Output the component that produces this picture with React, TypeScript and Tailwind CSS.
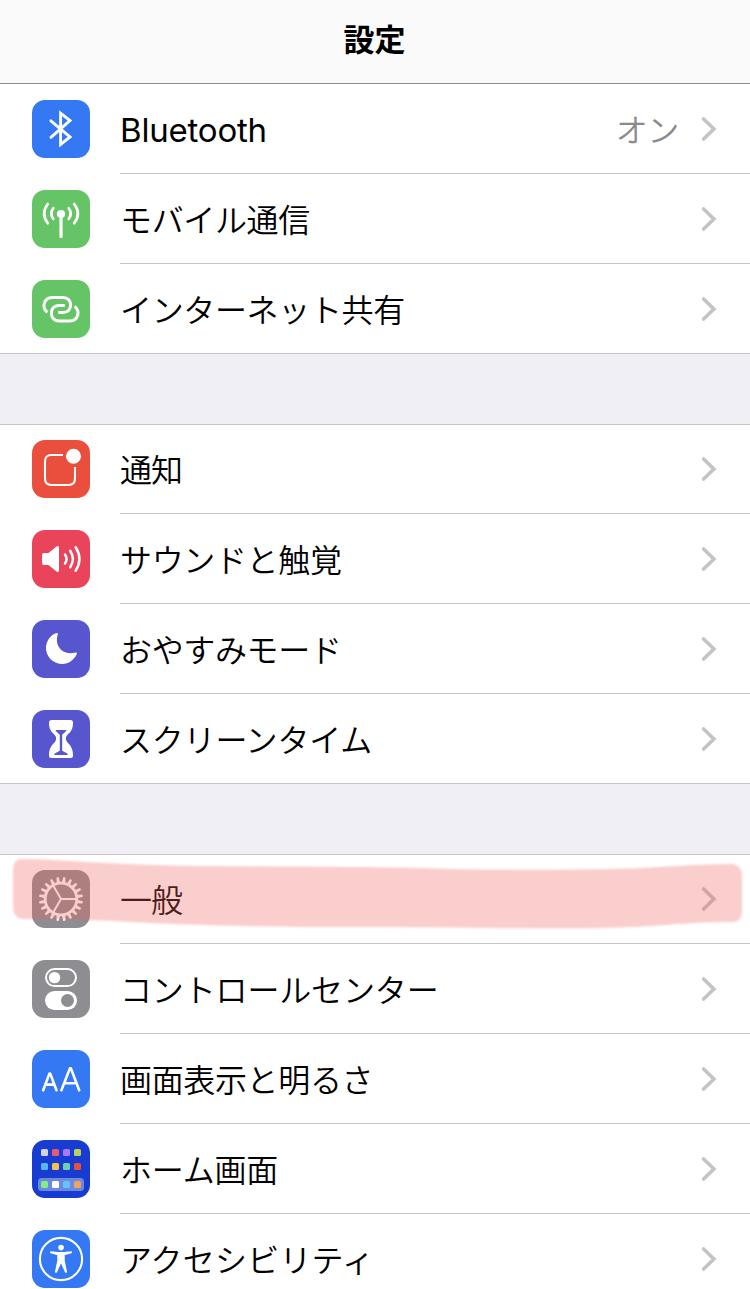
import React from "react";

type RowProps = { icon: React.ReactNode; tile: string; label: string; value?: string; last?: boolean; spacing?: string };

function Chevron() {
  return (
    <svg className="mb-[2px] h-[26px] w-[16px]" viewBox="0 0 16 26" fill="none" stroke="#c4c4c6" strokeWidth="3.6" strokeLinecap="round" strokeLinejoin="miter">
      <path d="M2.6 3 L12.9 13 L2.6 23" />
    </svg>
  );
}

function Row({ icon, tile, label, value, last, spacing = "text-[32px] tracking-[-0.35px]" }: RowProps) {
  return (
    <div className={`flex h-[90px] items-stretch pl-8 ${last ? "border-b border-[#c6c6c9]" : ""}`}>
      <div className={`mt-4 mr-[30px] h-[58px] w-[58px] shrink-0 overflow-hidden rounded-[13px] ${tile}`}>
        <svg className="h-[58px] w-[58px]" viewBox="0 0 58 58" fill="none" stroke="white" strokeLinecap="round" strokeLinejoin="round">
          {icon}
        </svg>
      </div>
      <div className={`flex flex-1 items-center pt-[2px] pr-[33px] ${last ? "" : "border-b border-[#c6c6c9]"}`}>
        <span className={`flex-1 pt-[2px] leading-none whitespace-nowrap text-black ${spacing}`}>{label}</span>
        {value && <span className="mr-[22px] pt-[2px] text-[32px] leading-none tracking-[-0.35px] text-[#8a8a8e]">{value}</span>}
        <Chevron />
      </div>
    </div>
  );
}

function Group({ children, top = true }: { children: React.ReactNode; top?: boolean }) {
  return (
    <section className={`relative bg-white ${top ? "shadow-[inset_0_1px_0_#c6c6c9]" : ""}`}>{children}</section>
  );
}

const bluetooth = <path strokeWidth="2.9" strokeLinejoin="miter" d="M18.9 20.8 L38 37 L28.6 44.4 V13.2 L38 20.6 L18.9 37.3" />;

const antenna = (
  <g strokeWidth="2.7">
    <circle cx="29" cy="24" r="4.1" fill="white" stroke="none" />
    <path strokeWidth="3.2" d="M29 25 V46.4" />
    <path d="M21.3 18.2 Q17.3 23.5 21.3 28.8 M36.7 18.2 Q40.7 23.5 36.7 28.8 M15.8 14 Q8.4 23.5 15.8 33.2 M42.2 14 Q49.6 23.5 42.2 33.2" />
  </g>
);

const hotspot = (
  <path
    strokeWidth="3"
    strokeLinecap="butt"
    d="M15.4 32.4 C9.4 27.8 11.6 17.4 20.3 17.4 H31 C41.2 17.4 41.2 32.6 31 32.6 H26.2 M42.6 26.4 C48.6 31 46.4 40.9 37.7 40.9 H27 C16.8 40.9 16.8 25.4 27 25.4 H32.8"
  />
);

const notifications = (
  <g>
    <path strokeWidth="2.1" d="M31 15 H19.5 Q13 15 13 21.5 V38.5 Q13 45 19.5 45 H36.5 Q43 45 43 38.5 V27" strokeLinecap="butt" />
    <circle cx="41.5" cy="16.3" r="7.5" fill="white" stroke="none" />
  </g>
);

const sound = (
  <g strokeWidth="2.5">
    <path stroke="none" fill="white" d="M10 25 Q10 23 12 23 H16.5 L24.5 16.5 Q27 15 27 18 V40 Q27 43 24.5 41.5 L16.5 35 H12 Q10 35 10 33 Z" />
    <path d="M33 24.5 Q36 29 33 33.5 M38.2 20.8 Q43.6 29 38.2 37.2 M43.6 17.2 Q51.3 29 43.6 40.8" />
  </g>
);

const moon = <path stroke="none" fill="white" d="M24.8 13 Q26.3 12.8 25.8 14.5 C22 26 31 36 43.5 32.5 Q45.5 32.2 44.8 34 C42 40 36.5 44 30.5 44 C21.5 44 14 37 14 28 C14 21 18.5 14.8 24.8 13 Z" />;

const hourglass = (
  <g>
    <path stroke="none" fill="white" d="M19.5 10 H38.5 Q41 10 41 12.5 C41 19 39 21.5 35.5 24.8 Q32.2 28.5 35.5 32.5 C39 36 41 39 41 45.5 Q41 48 38.5 48 H19.5 Q17 48 17 45.5 C17 39 19 36 22.5 32.5 Q25.8 28.5 22.5 24.8 C19 21.5 17 19 17 12.5 Q17 10 19.5 10 Z" />
    <path stroke="none" fill="#5756ce" d="M24 20 H34 Q34.8 20 34.2 21 L30.2 24.8 V40.8 L35.3 43.4 Q36.6 45 35 45 H23 Q21.4 45 22.7 43.4 L27.8 40.8 V24.8 L23.8 21 Q23.2 20 24 20 Z" />
  </g>
);

const teeth = Array.from({ length: 20 }, (_, i) => i * 18 + 9);
const gear = (
  <g>
    {teeth.map((a) => (
      <path key={a} transform={`rotate(${a} 29 29)`} stroke="none" fill="white" d="M27.2 13.2 L27.9 7 H30.1 L30.8 13.2 Z" />
    ))}
    <circle cx="29" cy="29" r="15.8" strokeWidth="2.8" />
    <path strokeWidth="2" d="M29 29 H44 M29 29 L21.2 15.5 M29 29 L21.2 42.5" />
  </g>
);

const controls = (
  <g>
    <rect x="14" y="9.1" width="30" height="17" rx="8.5" strokeWidth="2" />
    <circle cx="22.5" cy="17.6" r="5.7" fill="white" stroke="none" />
    <rect x="13" y="31" width="32" height="19" rx="9.5" fill="white" stroke="none" />
    <circle cx="35.5" cy="40.5" r="6.5" fill="#8e8e92" stroke="none" />
  </g>
);

const display = (
  <g strokeWidth="2.6">
    <path d="M11.2 40.2 L17.4 23.6 H18.2 L24.5 40.2 M13.4 34.6 H22.3" />
    <path d="M29.4 40.2 L37.9 18.4 H38.9 L47.2 40.2 M32.5 33.2 H44.3" />
  </g>
);

const apps = [
  [9, 9, "#d2d3d6"], [20, 9, "#e85c70"], [31, 9, "#ac78fb"], [42, 9, "#b7d35b"],
  [9, 23, "#57b8f9"], [20, 23, "#f5c04b"], [31, 23, "#6dd3a9"], [42, 23, "#e6503e"],
  [9, 41, "#82ed82"], [20, 41, "#ffffff"], [31, 41, "#62c6fb"], [42, 41, "#efa35b"],
] as const;
const home = (
  <g stroke="none">
    <rect x="6" y="38" width="46" height="13" rx="3.5" fill="#6d88de" />
    {apps.map(([x, y, c]) => (
      <rect key={`${x}-${y}`} x={x} y={y} width="7" height="7" rx="1.5" fill={c} />
    ))}
  </g>
);

const accessibility = (
  <g>
    <circle cx="29" cy="29" r="21.1" strokeWidth="2.1" />
    <circle cx="29" cy="17.6" r="2.8" fill="white" stroke="none" />
    <path fill="white" strokeWidth="1.5" d="M18.8 21.9 L26 22.8 H32 L39.2 21.9 V22.6 L32 24.6 V31 L34.3 42 H33.7 L29.4 32.4 H28.6 L24.3 42 H23.7 L26 31 V24.6 L18.8 22.6 Z" />
  </g>
);

export default function App() {
  return (
    <main className="h-[1289px] w-[750px] overflow-hidden bg-[#f0eff5] font-['Inter','Noto_Sans_CJK_JP',sans-serif] font-[350]">
      <header className="flex h-[84px] items-center justify-center border-b border-[#8e8e90] bg-[#fafafa] pr-[1px] pb-[5px]">
        <h1 className="text-[31px] leading-none font-bold text-black">設定</h1>
      </header>
      <div className="flex flex-col gap-[70px]">
        <Group top={false}>
          <Row icon={bluetooth} tile="bg-[#3478f4]" label="Bluetooth" value="オン" spacing="font-normal text-[33px] tracking-[-0.2px]" />
          <Row icon={antenna} tile="bg-[#65c466]" label="モバイル通信" />
          <Row icon={hotspot} tile="bg-[#65c466]" label="インターネット共有" last />
        </Group>
        <Group>
          <Row icon={notifications} tile="bg-[#ea4e3d]" label="通知" spacing="text-[32px] tracking-[-1px]" />
          <Row icon={sound} tile="bg-[#e9445a]" label="サウンドと触覚" />
          <Row icon={moon} tile="bg-[#5756ce]" label="おやすみモード" />
          <Row icon={hourglass} tile="bg-[#5756ce]" label="スクリーンタイム" spacing="text-[32px] tracking-[-0.2px]" last />
        </Group>
        <Group>
          <Row icon={gear} tile="bg-[#8e8e92]" label="一般" spacing="text-[32px] tracking-[-1px]" />
          <Row icon={controls} tile="bg-[#8e8e92]" label="コントロールセンター" spacing="text-[32px] tracking-[-0.15px]" />
          <Row icon={display} tile="bg-[#3478f4]" label="画面表示と明るさ" />
          <Row icon={home} tile="bg-[#183bd2]" label="ホーム画面" spacing="text-[32px] tracking-[-0.2px]" />
          <Row icon={accessibility} tile="bg-[#3478f4]" label="アクセシビリティ" spacing="text-[32px] tracking-[0.2px]" />
          <svg className="pointer-events-none absolute top-0 left-0 h-[90px] w-[750px]" viewBox="0 0 750 90">
            <path className="blur-[1px]" fill="#ee6059" fillOpacity="0.31" d="M20 5 C60 5 110 11 200 12 C350 13 400 13 450 15 C500 16 560 16 610 15 C660 14 690 10 733 10 Q742 12 742 22 V56 Q742 68 733 68 C680 68 660 73 600 74 C540 75 440 73 350 73 C250 73 200 71 150 69 C100 66 60 65 22 65 Q13 64 13 52 V18 Q13 6 20 5 Z" />
          </svg>
        </Group>
      </div>
    </main>
  );
}
